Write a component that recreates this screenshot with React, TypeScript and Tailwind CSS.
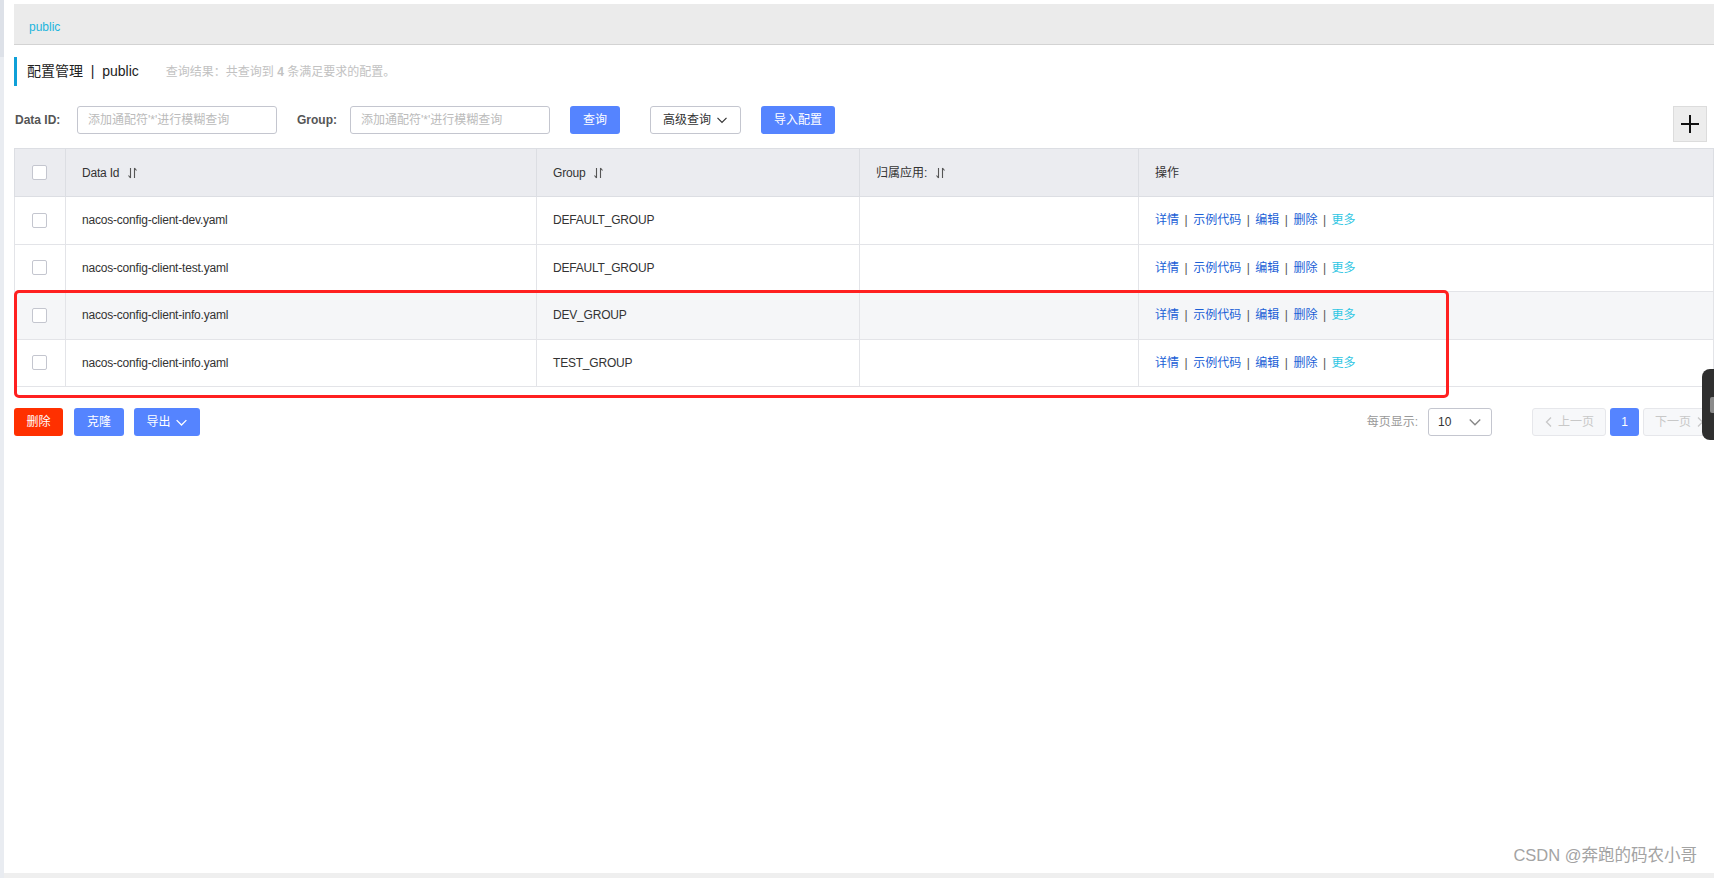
import React from 'react'

const rows = [
  { id: 'nacos-config-client-dev.yaml', group: 'DEFAULT_GROUP', hover: false },
  { id: 'nacos-config-client-test.yaml', group: 'DEFAULT_GROUP', hover: false },
  { id: 'nacos-config-client-info.yaml', group: 'DEV_GROUP', hover: true },
  { id: 'nacos-config-client-info.yaml', group: 'TEST_GROUP', hover: false }
]

const latin = 'tracking-[-0.2px]'

function SortIcon() {
  return (
    <svg width="11" height="12" viewBox="0 0 11 12" className="ml-[8px] inline-block" aria-hidden="true">
      <path d="M3.5 1v10M3.5 11L1.5 8.5" stroke="#555" strokeWidth="1.1" fill="none" />
      <path d="M7.5 11V1M7.5 1l2 2.5" stroke="#555" strokeWidth="1.1" fill="none" />
    </svg>
  )
}

function Chevron({ color = '#333', size = 12 }: { color?: string; size?: number }) {
  return (
    <svg width={size} height={size} viewBox="0 0 12 12" aria-hidden="true">
      <path d="M1.5 3.8L6 8.3l4.5-4.5" stroke={color} strokeWidth="1.2" fill="none" />
    </svg>
  )
}

function Checkbox() {
  return <span className="block h-[15px] w-[15px] rounded-[2px] border border-[#c4c6cf] bg-white" />
}

function Actions() {
  const sep = <span className="mx-[5.5px] text-[#555]">|</span>
  return (
    <span className="text-[12px] text-[#1b5fd6]">
      详情{sep}示例代码{sep}编辑{sep}删除{sep}
      <span className="text-[#2fc6e3]">更多</span>
    </span>
  )
}

export default function App() {
  return (
    <div className="relative flex h-[878px] w-[1714px] overflow-hidden bg-white font-['Liberation_Sans','Noto_Sans_CJK_SC',sans-serif] text-[#333]">
      {/* left strip */}
      <div className="flex w-[4px] shrink-0 flex-col bg-[#e9ecf1]">
        <div className="h-[57px] bg-[#dde1e8]" />
      </div>

      <div className="flex min-w-0 flex-1 flex-col">
        <div className="flex min-h-0 flex-1 flex-col pl-[10px] pt-[4px]">
          {/* namespace bar */}
          <div className="flex h-[41px] items-center border-b border-[#d3d3d3] bg-[#ebebeb] pl-[15px] pt-[5px] text-[12px] text-[#22b5dd]">
            public
          </div>

          {/* title */}
          <div className="mt-[12px] flex h-[29px] items-center border-l-[3px] border-[#0fa0d8] pl-[10px]">
            <span className="text-[14px] text-[#222]">配置管理 &nbsp;|&nbsp; public</span>
            <span className="ml-[27px] text-[12px] text-[#c2c2c2]">
              查询结果：共查询到 <b>4</b> 条满足要求的配置。
            </span>
          </div>

          {/* search */}
          <div className="mt-[20px] flex h-[28px] items-center pl-[1px]">
            <span className="w-[49px] text-[12px] font-bold text-[#555]">Data ID:</span>
            <div className="ml-[13px] flex h-[28px] w-[200px] items-center rounded-[3px] border border-[#c4c6cf] pl-[10px] text-[12px] text-[#bbb]">
              添加通配符'*'进行模糊查询
            </div>
            <span className="ml-[20px] w-[40px] text-[12px] font-bold text-[#555]">Group:</span>
            <div className="ml-[13px] flex h-[28px] w-[200px] items-center overflow-hidden whitespace-nowrap rounded-[3px] border border-[#c4c6cf] pl-[10px] text-[12px] text-[#bbb]">
              添加通配符'*'进行模糊查询
            </div>
            <button className="ml-[20px] h-[28px] w-[50px] rounded-[3px] bg-[#5584ff] text-[12px] text-white">查询</button>
            <button className="ml-[30px] flex h-[28px] w-[91px] items-center justify-center gap-[5px] rounded-[3px] border border-[#c4c6cf] bg-white text-[12px] text-[#333]">
              高级查询 <Chevron />
            </button>
            <button className="ml-[20px] h-[28px] w-[74px] rounded-[3px] bg-[#5584ff] text-[12px] text-white">导入配置</button>
            <div className="ml-auto mr-[7px] mt-[8px] flex h-[36px] w-[34px] items-center justify-center border border-[#dcdcdc] bg-[#ededed]">
              <svg width="20" height="20" viewBox="0 0 20 20" aria-hidden="true">
                <path d="M10 1v18M1 10h18" stroke="#111" strokeWidth="2" />
              </svg>
            </div>
          </div>

          {/* table */}
          <table className="mt-[14px] w-[1700px] table-fixed border-collapse border border-[#dcdee3] text-[12px]">
            <colgroup>
              <col className="w-[51px]" />
              <col className="w-[471px]" />
              <col className="w-[323px]" />
              <col className="w-[279px]" />
              <col />
            </colgroup>
            <thead>
              <tr className="h-[48px] bg-[#ebecf0] text-[#333]">
                <th className="border border-[#dcdee3] pl-[17px] font-normal">
                  <Checkbox />
                </th>
                <th className={`border border-[#dcdee3] pl-[16px] text-left font-normal ${latin}`}>
                  <span className="inline-flex items-center">Data Id<SortIcon /></span>
                </th>
                <th className={`border border-[#dcdee3] pl-[16px] text-left font-normal ${latin}`}>
                  <span className="inline-flex items-center">Group<SortIcon /></span>
                </th>
                <th className="border border-[#dcdee3] pl-[16px] text-left font-normal">
                  <span className="inline-flex items-center">归属应用:<SortIcon /></span>
                </th>
                <th className="border border-[#dcdee3] pl-[16px] text-left font-normal">操作</th>
              </tr>
            </thead>
            <tbody>
              {rows.map((r, i) => (
                <tr key={i} className={`h-[47.5px] ${r.hover ? 'bg-[#f5f6f8]' : 'bg-white'}`}>
                  <td className="border border-[#e3e4e8] pl-[17px]">
                    <Checkbox />
                  </td>
                  <td className={`border border-[#e3e4e8] pl-[16px] text-[#333] ${latin}`}>{r.id}</td>
                  <td className={`border border-[#e3e4e8] pl-[16px] text-[#333] ${latin}`}>{r.group}</td>
                  <td className="border border-[#e3e4e8]" />
                  <td className="border border-[#e3e4e8] pl-[16px]">
                    <Actions />
                  </td>
                </tr>
              ))}
            </tbody>
          </table>

          {/* footer actions */}
          <div className="mt-[21px] flex h-[28px] items-center">
            <button className="h-[28px] w-[49px] rounded-[3px] bg-[#ff3000] text-[12px] text-white">删除</button>
            <button className="ml-[11px] h-[28px] w-[50px] rounded-[3px] bg-[#5584ff] text-[12px] text-white">克隆</button>
            <button className="ml-[10px] flex h-[28px] w-[66px] items-center justify-center gap-[4px] rounded-[3px] bg-[#5584ff] text-[12px] text-white">
              导出 <Chevron color="#fff" size={13} />
            </button>

            <div className="-mr-[3px] ml-auto flex items-center">
              <span className="text-[12px] text-[#999]">每页显示:</span>
              <div className="ml-[10px] flex h-[28px] w-[64px] items-center justify-between rounded-[3px] border border-[#c4c6cf] pl-[9px] pr-[9px] text-[12px] text-[#333]">
                <span>10</span>
                <Chevron color="#888" size={14} />
              </div>
              <button className="ml-[40px] flex h-[28px] w-[74px] items-center justify-center gap-[4px] rounded-[3px] border border-[#e6e7eb] bg-[#f7f8fa] text-[12px] text-[#c8c8c8]">
                <svg width="10" height="12" viewBox="0 0 10 12" aria-hidden="true">
                  <path d="M7 1.5L2.5 6 7 10.5" stroke="#c8c8c8" strokeWidth="1.3" fill="none" />
                </svg>
                上一页
              </button>
              <button className="ml-[4px] h-[28px] w-[29px] rounded-[3px] bg-[#5584ff] text-[12px] text-white">1</button>
              <button className="ml-[4px] flex h-[28px] w-[74px] items-center justify-center gap-[4px] rounded-[3px] border border-[#e6e7eb] bg-[#f7f8fa] text-[12px] text-[#c8c8c8]">
                下一页
                <svg width="10" height="12" viewBox="0 0 10 12" aria-hidden="true">
                  <path d="M3 1.5L7.5 6 3 10.5" stroke="#c8c8c8" strokeWidth="1.3" fill="none" />
                </svg>
              </button>
            </div>
          </div>
        </div>
        <div className="h-[5px] bg-[#efefef]" />
      </div>

      {/* annotation highlight */}
      <div className="pointer-events-none absolute left-[14px] top-[290px] h-[108px] w-[1435px] rounded-[5px] border-[3px] border-[#ff2020]" />

      {/* floating side widget */}
      <div className="absolute right-0 top-[369px] h-[71px] w-[12px] rounded-l-[8px] bg-[#2f2f2f]">
        <div className="absolute right-0 top-[28px] h-[16px] w-[4px] rounded-l-[2px] bg-[#8a8a8a]" />
      </div>

      {/* watermark */}
      <div className="pointer-events-none absolute bottom-[10px] right-[17px] text-[16.5px] text-[#a3a3a3]">
        CSDN @奔跑的码农小哥
      </div>
    </div>
  )
}
